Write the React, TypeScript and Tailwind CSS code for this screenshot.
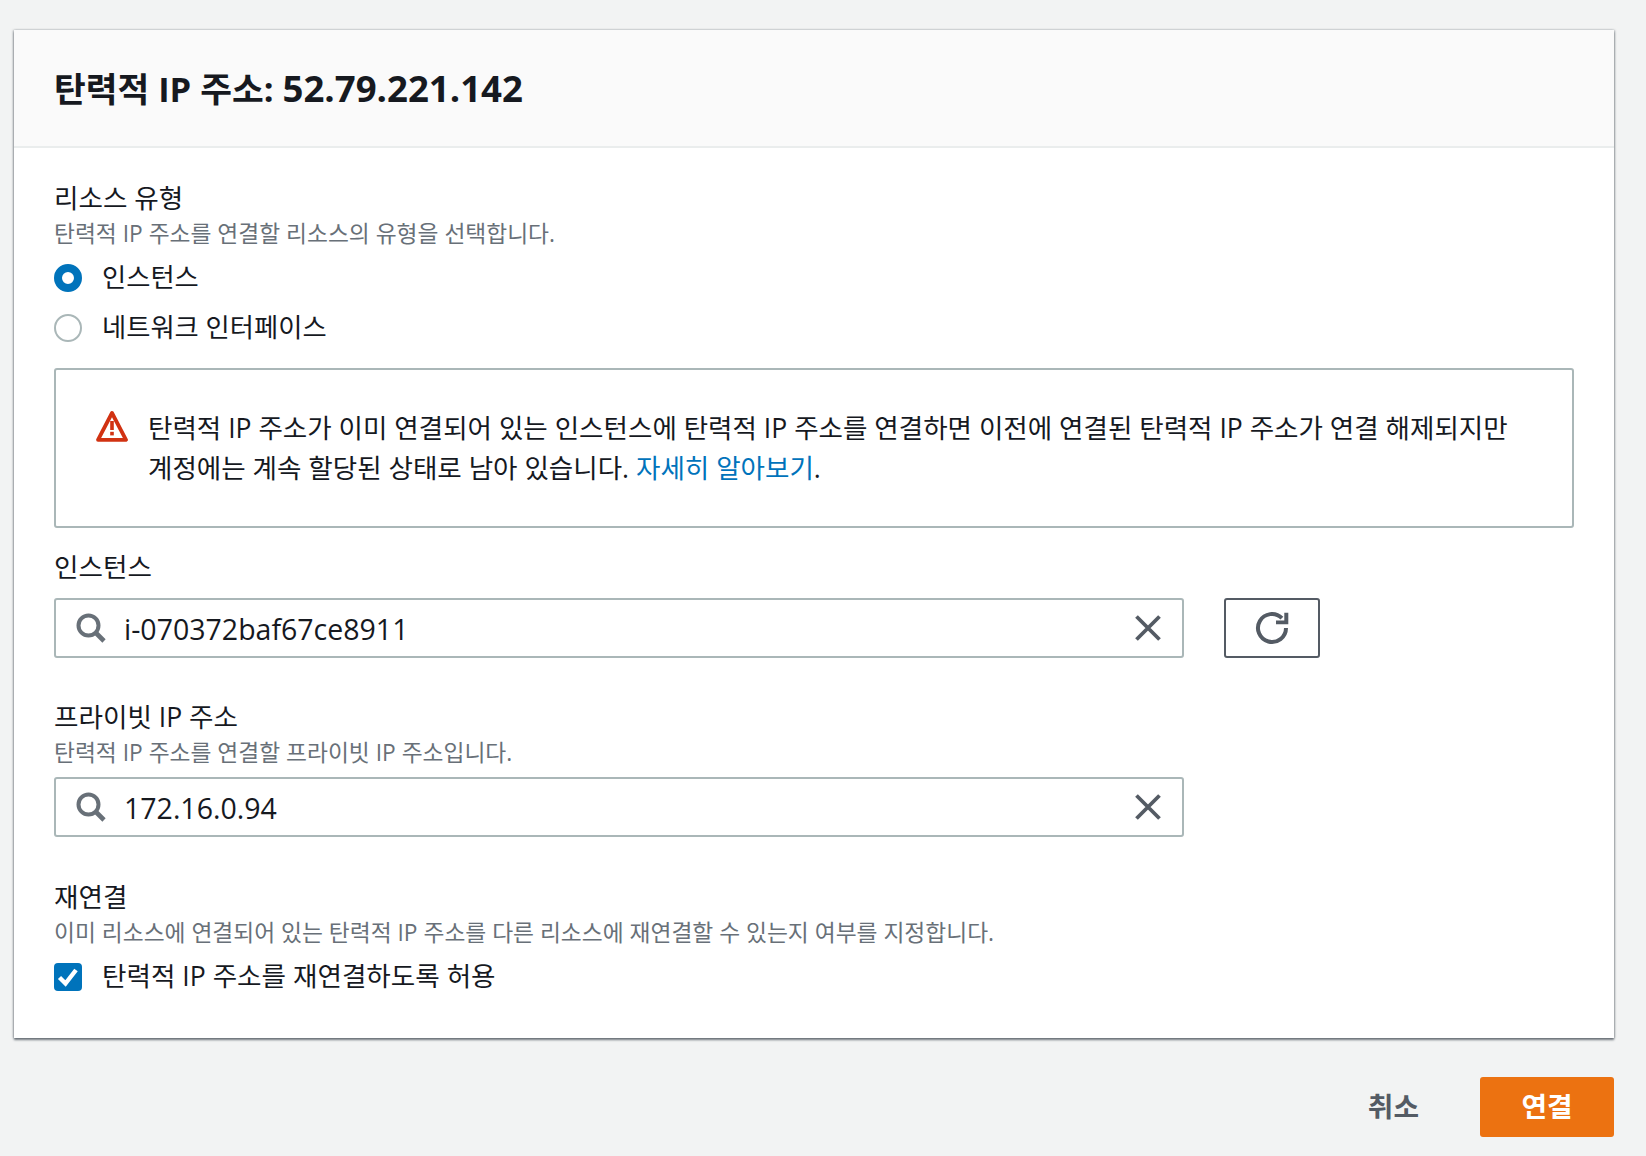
import React from 'react';

const Hint: React.FC<{ children: React.ReactNode }> = ({ children }) => (
    <p className="mt-[3px] text-[22.75px] leading-[30px] text-[#687078]">{children}</p>
);

const Label: React.FC<{ children: React.ReactNode }> = ({ children }) => (
    <p className="text-[26.6px] leading-[36px] text-[#16191f]">{children}</p>
);

const SearchIcon = () => (
    <svg viewBox="0 0 30 30" className="h-[30px] w-[30px] shrink-0">
        <circle cx="12.5" cy="12.5" r="10" fill="none" stroke="#687078" strokeWidth="4" />
        <path d="M19.5 19.5 L28 28" fill="none" stroke="#687078" strokeWidth="4.6" />
    </svg>
);

const ClearIcon = () => (
    <svg viewBox="0 0 28 28" className="h-[28px] w-[28px] shrink-0">
        <path d="M2.5 2.5 L25.5 25.5 M25.5 2.5 L2.5 25.5" fill="none" stroke="#545b64" strokeWidth="3.8" />
    </svg>
);

const TextBox: React.FC<{ value: string }> = ({ value }) => (
    <div className="flex h-[60px] w-[1130px] items-center rounded-[3px] border-2 border-[#aab7b8] bg-white pl-[20px] pr-[20px]">
        <SearchIcon />
        <span className="ml-[18px] flex-1 pt-[3px] text-[28.5px] text-[#16191f]">{value}</span>
        <ClearIcon />
    </div>
);

export default function App() {
    return (
        <div
            className="flex h-[1156px] w-[1646px] flex-col bg-[#f2f3f3] px-[14px] pt-[30px] pr-[32px]"
            style={{ fontFamily: '"Open Sans", "Noto Sans CJK KR", sans-serif' }}
        >
            <div className="h-[1008px] bg-white shadow-[0_2px_2px_rgba(84,91,100,0.8),-1px_0_2px_rgba(84,91,100,0.35),1px_0_2px_rgba(84,91,100,0.35)]">
                <div className="flex h-[118px] items-center border-b-2 border-[#eaeded] bg-[#fafafa] px-[40px]">
                    <h1 className="pt-[1px] text-[34.5px] font-bold text-[#16191f]">
                        탄력적 IP 주소: <span className="text-[36.6px]">52.79.221.142</span>
                    </h1>
                </div>
                <div className="px-[40px] pt-[32px]">
                    <Label>리소스 유형</Label>
                    <Hint>탄력적 IP 주소를 연결할 리소스의 유형을 선택합니다.</Hint>
                    <div className="mt-[4px] flex h-[50px] items-center gap-[20px]">
                        <span className="h-[28px] w-[28px] rounded-full border-[8px] border-[#0073bb] bg-white" />
                        <span className="text-[26.3px] text-[#16191f]">인스턴스</span>
                    </div>
                    <div className="flex h-[50px] items-center gap-[20px]">
                        <span className="h-[28px] w-[28px] rounded-full border-2 border-[#aab7b8] bg-white" />
                        <span className="text-[26.3px] text-[#16191f]">네트워크 인터페이스</span>
                    </div>
                    <div className="mt-[15px] flex h-[160px] w-[1520px] items-center rounded-[3px] border-2 border-[#aab7b8] px-[40px]">
                        <svg viewBox="0 0 32 32" className="mt-[40px] h-[32px] w-[32px] shrink-0 self-start">
                            <path d="M16 3 L30 29.8 H2 Z" fill="none" stroke="#d13212" strokeWidth="3.8" strokeLinejoin="round" />
                            <rect x="14.2" y="11" width="3.6" height="9" fill="#d13212" />
                            <rect x="14.2" y="21.8" width="3.6" height="3.6" fill="#d13212" />
                        </svg>
                        <p className="ml-[20px] break-keep text-[26.55px] leading-[40px] text-[#16191f]">
                            탄력적 IP 주소가 이미 연결되어 있는 인스턴스에 탄력적 IP 주소를 연결하면 이전에 연결된 탄력적 IP 주소가 연결 해제되지만 계정에는 계속 할당된 상태로 남아 있습니다.{' '}
                            <span className="text-[#0073bb]">자세히 알아보기</span>.
                        </p>
                    </div>
                    <div className="mt-[21px]">
                        <Label>인스턴스</Label>
                    </div>
                    <div className="mt-[13px] flex items-center gap-[40px]">
                        <TextBox value="i-070372baf67ce8911" />
                        <div className="flex h-[60px] w-[96px] items-center justify-center rounded-[3px] border-2 border-[#545b64] bg-white">
                            <svg viewBox="0 0 34 34" className="h-[34px] w-[34px]">
                                <path d="M31 17 A14 14 0 1 1 26.9 7.1" fill="none" stroke="#545b64" strokeWidth="4" />
                                <path d="M33.3 1.8 V13.2 H21 V9.5 H29.3 V1.8 Z" fill="#545b64" />
                            </svg>
                        </div>
                    </div>
                    <div className="mt-[41px]">
                        <Label>프라이빗 IP 주소</Label>
                        <Hint>탄력적 IP 주소를 연결할 프라이빗 IP 주소입니다.</Hint>
                    </div>
                    <div className="mt-[9px]">
                        <TextBox value="172.16.0.94" />
                    </div>
                    <div className="mt-[42px]">
                        <Label>재연결</Label>
                        <Hint>이미 리소스에 연결되어 있는 탄력적 IP 주소를 다른 리소스에 재연결할 수 있는지 여부를 지정합니다.</Hint>
                    </div>
                    <div className="mt-[9px] flex h-[40px] items-center gap-[20px]">
                        <span className="flex h-[28px] w-[28px] items-center justify-center rounded-[4px] bg-[#0073bb]">
                            <svg viewBox="0 0 28 28" className="h-[28px] w-[28px]">
                                <path d="M5.5 14.5 L11.5 20.5 L22 7" fill="none" stroke="#fff" strokeWidth="4.4" />
                            </svg>
                        </span>
                        <span className="text-[26.6px] text-[#16191f]">탄력적 IP 주소를 재연결하도록 허용</span>
                    </div>
                </div>
            </div>
            <div className="mt-[39px] flex items-center justify-end">
                <span className="mr-[61px] text-[27.8px] font-bold text-[#545b64]">취소</span>
                <span className="flex h-[60px] w-[134px] items-center justify-center rounded-[3px] bg-[#ec7211] text-[27.8px] font-bold text-white">연결</span>
            </div>
        </div>
    );
}
